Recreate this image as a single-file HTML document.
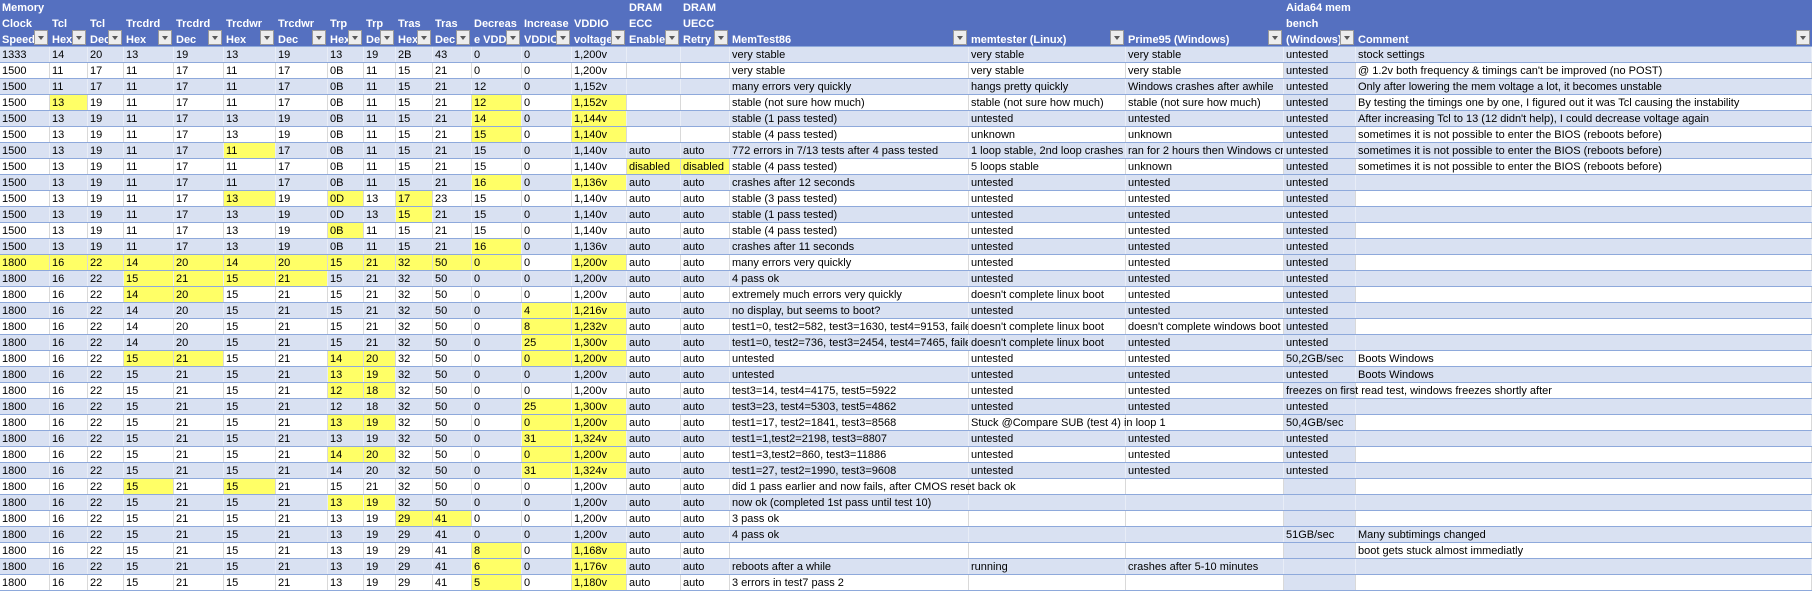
<!DOCTYPE html>
<html><head><meta charset="utf-8">
<style>
*{box-sizing:border-box;margin:0;padding:0}
body{width:1812px;height:592px;background:#fff;font-family:"Liberation Sans",Arial,sans-serif;font-size:11px;color:#000;overflow:hidden}
.r{display:flex;height:16px;border-bottom:1px solid #8EA9DB;background:#fff}
.r.b{background:#D9E1F2}
.r>div{height:15px;line-height:16px;padding-left:2px;white-space:nowrap;overflow:hidden;border-right:1px solid #D9D9D9;flex:none;position:relative}
.r.b>div{border-right:1px solid #E8EDF7}
.r>div.y{background:#FFFF66}
.r>div.a{background:#D9E1F2}
.r>div.w{background:#fff}
.r>div.s{overflow:visible;z-index:2}
.h{display:flex;height:47px;background:#5570C0;border-bottom:1px solid #8EA9DB}
.h>div{flex:none;position:relative;color:#fff;font-weight:bold;display:flex;flex-direction:column;justify-content:flex-end;padding:0 0 0 2px;overflow:hidden;white-space:nowrap;line-height:16px}
.h>div span{position:relative;top:2px}
.h>div i{position:absolute;right:2px;bottom:1px;width:14px;height:15px;background:#EDEDED;border:1px solid #9a9a9a;z-index:3}
.h>div i:after{content:"";position:absolute;left:3px;top:5px;border-left:3.5px solid transparent;border-right:3.5px solid transparent;border-top:4px solid #5a5a5a}
.h>div:nth-child(1),.r>div:nth-child(1){width:50px}
.h>div:nth-child(2),.r>div:nth-child(2){width:38px}
.h>div:nth-child(3),.r>div:nth-child(3){width:36px}
.h>div:nth-child(4),.r>div:nth-child(4){width:50px}
.h>div:nth-child(5),.r>div:nth-child(5){width:50px}
.h>div:nth-child(6),.r>div:nth-child(6){width:52px}
.h>div:nth-child(7),.r>div:nth-child(7){width:52px}
.h>div:nth-child(8),.r>div:nth-child(8){width:36px}
.h>div:nth-child(9),.r>div:nth-child(9){width:32px}
.h>div:nth-child(10),.r>div:nth-child(10){width:37px}
.h>div:nth-child(11),.r>div:nth-child(11){width:39px}
.h>div:nth-child(12),.r>div:nth-child(12){width:50px}
.h>div:nth-child(13),.r>div:nth-child(13){width:50px}
.h>div:nth-child(14),.r>div:nth-child(14){width:55px}
.h>div:nth-child(15),.r>div:nth-child(15){width:54px}
.h>div:nth-child(16),.r>div:nth-child(16){width:49px}
.h>div:nth-child(17),.r>div:nth-child(17){width:239px}
.h>div:nth-child(18),.r>div:nth-child(18){width:157px}
.h>div:nth-child(19),.r>div:nth-child(19){width:158px}
.h>div:nth-child(20),.r>div:nth-child(20){width:72px}
.h>div:nth-child(21),.r>div:nth-child(21){width:456px}
.r>div:nth-child(20){background:#D9E1F2}
</style></head><body>
<div class="h">
<div><span>Memory</span><span>Clock</span><span>Speed</span><i></i></div>
<div><span>Tcl</span><span>Hex</span><i></i></div>
<div><span>Tcl</span><span>Dec</span><i></i></div>
<div><span>Trcdrd</span><span>Hex</span><i></i></div>
<div><span>Trcdrd</span><span>Dec</span><i></i></div>
<div><span>Trcdwr</span><span>Hex</span><i></i></div>
<div><span>Trcdwr</span><span>Dec</span><i></i></div>
<div><span>Trp</span><span>Hex</span><i></i></div>
<div><span>Trp</span><span>Dec</span><i></i></div>
<div><span>Tras</span><span>Hex</span><i></i></div>
<div><span>Tras</span><span>Dec</span><i></i></div>
<div><span>Decreas</span><span>e VDDIO</span><i></i></div>
<div><span>Increase</span><span>VDDIO</span><i></i></div>
<div><span>VDDIO</span><span>voltage</span><i></i></div>
<div><span>DRAM</span><span>ECC</span><span>Enable</span><i></i></div>
<div><span>DRAM</span><span>UECC</span><span>Retry</span><i></i></div>
<div><span>MemTest86</span><i></i></div>
<div><span>memtester (Linux)</span><i></i></div>
<div><span>Prime95 (Windows)</span><i></i></div>
<div><span>Aida64 mem</span><span>bench</span><span>(Windows)</span><i></i></div>
<div><span>Comment</span><i></i></div>
</div>

<div class="r b"><div>1333</div><div>14</div><div>20</div><div>13</div><div>19</div><div>13</div><div>19</div><div>13</div><div>19</div><div>2B</div><div>43</div><div>0</div><div>0</div><div>1,200v</div><div></div><div></div><div>very stable</div><div>very stable</div><div>very stable</div><div>untested</div><div>stock settings</div></div>
<div class="r"><div>1500</div><div>11</div><div>17</div><div>11</div><div>17</div><div>11</div><div>17</div><div>0B</div><div>11</div><div>15</div><div>21</div><div>0</div><div>0</div><div>1,200v</div><div></div><div></div><div>very stable</div><div>very stable</div><div>very stable</div><div>untested</div><div>@ 1.2v both frequency &amp; timings can't be improved (no POST)</div></div>
<div class="r b"><div>1500</div><div>11</div><div>17</div><div>11</div><div>17</div><div>11</div><div>17</div><div>0B</div><div>11</div><div>15</div><div>21</div><div>12</div><div>0</div><div>1,152v</div><div></div><div></div><div>many errors very quickly</div><div>hangs pretty quickly</div><div>Windows crashes after awhile</div><div>untested</div><div>Only after lowering the mem voltage a lot, it becomes unstable</div></div>
<div class="r"><div>1500</div><div class="y">13</div><div>19</div><div>11</div><div>17</div><div>11</div><div>17</div><div>0B</div><div>11</div><div>15</div><div>21</div><div class="y">12</div><div>0</div><div class="y">1,152v</div><div></div><div></div><div>stable (not sure how much)</div><div>stable (not sure how much)</div><div>stable (not sure how much)</div><div>untested</div><div>By testing the timings one by one, I figured out it was Tcl causing the instability</div></div>
<div class="r b"><div>1500</div><div>13</div><div>19</div><div>11</div><div>17</div><div>13</div><div>19</div><div>0B</div><div>11</div><div>15</div><div>21</div><div class="y">14</div><div>0</div><div class="y">1,144v</div><div></div><div></div><div>stable (1 pass tested)</div><div>untested</div><div>untested</div><div>untested</div><div>After increasing Tcl to 13 (12 didn't help), I could decrease voltage again</div></div>
<div class="r"><div>1500</div><div>13</div><div>19</div><div>11</div><div>17</div><div>13</div><div>19</div><div>0B</div><div>11</div><div>15</div><div>21</div><div class="y">15</div><div>0</div><div class="y">1,140v</div><div></div><div></div><div>stable (4 pass tested)</div><div>unknown</div><div>unknown</div><div>untested</div><div>sometimes it is not possible to enter the BIOS (reboots before)</div></div>
<div class="r b"><div>1500</div><div>13</div><div>19</div><div>11</div><div>17</div><div class="y">11</div><div>17</div><div>0B</div><div>11</div><div>15</div><div>21</div><div>15</div><div>0</div><div>1,140v</div><div>auto</div><div>auto</div><div>772 errors in 7/13 tests after 4 pass tested</div><div>1 loop stable, 2nd loop crashes</div><div>ran for 2 hours then Windows crashed</div><div>untested</div><div>sometimes it is not possible to enter the BIOS (reboots before)</div></div>
<div class="r"><div>1500</div><div>13</div><div>19</div><div>11</div><div>17</div><div>11</div><div>17</div><div>0B</div><div>11</div><div>15</div><div>21</div><div>15</div><div>0</div><div>1,140v</div><div class="y">disabled</div><div class="y">disabled</div><div>stable (4 pass tested)</div><div>5 loops stable</div><div>unknown</div><div>untested</div><div>sometimes it is not possible to enter the BIOS (reboots before)</div></div>
<div class="r b"><div>1500</div><div>13</div><div>19</div><div>11</div><div>17</div><div>11</div><div>17</div><div>0B</div><div>11</div><div>15</div><div>21</div><div class="y">16</div><div>0</div><div class="y">1,136v</div><div>auto</div><div>auto</div><div>crashes after 12 seconds</div><div>untested</div><div>untested</div><div>untested</div><div></div></div>
<div class="r"><div>1500</div><div>13</div><div>19</div><div>11</div><div>17</div><div class="y">13</div><div>19</div><div class="y">0D</div><div>13</div><div class="y">17</div><div>23</div><div>15</div><div>0</div><div>1,140v</div><div>auto</div><div>auto</div><div>stable (3 pass tested)</div><div>untested</div><div>untested</div><div>untested</div><div></div></div>
<div class="r b"><div>1500</div><div>13</div><div>19</div><div>11</div><div>17</div><div>13</div><div>19</div><div>0D</div><div>13</div><div class="y">15</div><div>21</div><div>15</div><div>0</div><div>1,140v</div><div>auto</div><div>auto</div><div>stable (1 pass tested)</div><div>untested</div><div>untested</div><div>untested</div><div></div></div>
<div class="r"><div>1500</div><div>13</div><div>19</div><div>11</div><div>17</div><div>13</div><div>19</div><div class="y">0B</div><div>11</div><div>15</div><div>21</div><div>15</div><div>0</div><div>1,140v</div><div>auto</div><div>auto</div><div>stable (4 pass tested)</div><div>untested</div><div>untested</div><div>untested</div><div></div></div>
<div class="r b"><div>1500</div><div>13</div><div>19</div><div>11</div><div>17</div><div>13</div><div>19</div><div>0B</div><div>11</div><div>15</div><div>21</div><div class="y">16</div><div>0</div><div>1,136v</div><div>auto</div><div>auto</div><div>crashes after 11 seconds</div><div>untested</div><div>untested</div><div>untested</div><div></div></div>
<div class="r"><div class="y">1800</div><div class="y">16</div><div class="y">22</div><div class="y">14</div><div class="y">20</div><div class="y">14</div><div class="y">20</div><div class="y">15</div><div class="y">21</div><div class="y">32</div><div class="y">50</div><div class="y">0</div><div>0</div><div class="y">1,200v</div><div>auto</div><div>auto</div><div>many errors very quickly</div><div>untested</div><div>untested</div><div>untested</div><div></div></div>
<div class="r b"><div>1800</div><div>16</div><div>22</div><div class="y">15</div><div class="y">21</div><div class="y">15</div><div class="y">21</div><div>15</div><div>21</div><div>32</div><div>50</div><div>0</div><div>0</div><div>1,200v</div><div>auto</div><div>auto</div><div>4 pass ok</div><div>untested</div><div>untested</div><div>untested</div><div></div></div>
<div class="r"><div>1800</div><div>16</div><div>22</div><div class="y">14</div><div class="y">20</div><div>15</div><div>21</div><div>15</div><div>21</div><div>32</div><div>50</div><div>0</div><div>0</div><div>1,200v</div><div>auto</div><div>auto</div><div>extremely much errors very quickly</div><div>doesn't complete linux boot</div><div>untested</div><div>untested</div><div></div></div>
<div class="r b"><div>1800</div><div>16</div><div>22</div><div>14</div><div>20</div><div>15</div><div>21</div><div>15</div><div>21</div><div>32</div><div>50</div><div>0</div><div class="y">4</div><div class="y">1,216v</div><div>auto</div><div>auto</div><div>no display, but seems to boot?</div><div>untested</div><div>untested</div><div>untested</div><div></div></div>
<div class="r"><div>1800</div><div>16</div><div>22</div><div>14</div><div>20</div><div>15</div><div>21</div><div>15</div><div>21</div><div>32</div><div>50</div><div>0</div><div class="y">8</div><div class="y">1,232v</div><div>auto</div><div>auto</div><div>test1=0, test2=582, test3=1630, test4=9153, failed</div><div>doesn't complete linux boot</div><div>doesn't complete windows boot</div><div>untested</div><div></div></div>
<div class="r b"><div>1800</div><div>16</div><div>22</div><div>14</div><div>20</div><div>15</div><div>21</div><div>15</div><div>21</div><div>32</div><div>50</div><div>0</div><div class="y">25</div><div class="y">1,300v</div><div>auto</div><div>auto</div><div>test1=0, test2=736, test3=2454, test4=7465, failed</div><div>doesn't complete linux boot</div><div>untested</div><div>untested</div><div></div></div>
<div class="r"><div>1800</div><div>16</div><div>22</div><div class="y">15</div><div class="y">21</div><div>15</div><div>21</div><div class="y">14</div><div class="y">20</div><div>32</div><div>50</div><div>0</div><div class="y">0</div><div class="y">1,200v</div><div>auto</div><div>auto</div><div>untested</div><div>untested</div><div>untested</div><div class="w">50,2GB/sec</div><div>Boots Windows</div></div>
<div class="r b"><div>1800</div><div>16</div><div>22</div><div>15</div><div>21</div><div>15</div><div>21</div><div class="y">13</div><div class="y">19</div><div>32</div><div>50</div><div>0</div><div>0</div><div>1,200v</div><div>auto</div><div>auto</div><div>untested</div><div>untested</div><div>untested</div><div>untested</div><div>Boots Windows</div></div>
<div class="r"><div>1800</div><div>16</div><div>22</div><div>15</div><div>21</div><div>15</div><div>21</div><div class="y">12</div><div class="y">18</div><div>32</div><div>50</div><div>0</div><div>0</div><div>1,200v</div><div>auto</div><div>auto</div><div>test3=14, test4=4175, test5=5922</div><div>untested</div><div>untested</div><div class="w s">freezes on first read test, windows freezes shortly after</div><div></div></div>
<div class="r b"><div>1800</div><div>16</div><div>22</div><div>15</div><div>21</div><div>15</div><div>21</div><div>12</div><div>18</div><div>32</div><div>50</div><div>0</div><div class="y">25</div><div class="y">1,300v</div><div>auto</div><div>auto</div><div>test3=23, test4=5303, test5=4862</div><div>untested</div><div>untested</div><div>untested</div><div></div></div>
<div class="r"><div>1800</div><div>16</div><div>22</div><div>15</div><div>21</div><div>15</div><div>21</div><div class="y">13</div><div class="y">19</div><div>32</div><div>50</div><div>0</div><div class="y">0</div><div class="y">1,200v</div><div>auto</div><div>auto</div><div>test1=17, test2=1841, test3=8568</div><div class="s">Stuck @Compare SUB (test 4) in loop 1</div><div></div><div class="w">50,4GB/sec</div><div></div></div>
<div class="r b"><div>1800</div><div>16</div><div>22</div><div>15</div><div>21</div><div>15</div><div>21</div><div>13</div><div>19</div><div>32</div><div>50</div><div>0</div><div class="y">31</div><div class="y">1,324v</div><div>auto</div><div>auto</div><div>test1=1,test2=2198, test3=8807</div><div>untested</div><div>untested</div><div>untested</div><div></div></div>
<div class="r"><div>1800</div><div>16</div><div>22</div><div>15</div><div>21</div><div>15</div><div>21</div><div class="y">14</div><div class="y">20</div><div>32</div><div>50</div><div>0</div><div class="y">0</div><div class="y">1,200v</div><div>auto</div><div>auto</div><div>test1=3,test2=860, test3=11886</div><div>untested</div><div>untested</div><div>untested</div><div></div></div>
<div class="r b"><div>1800</div><div>16</div><div>22</div><div>15</div><div>21</div><div>15</div><div>21</div><div>14</div><div>20</div><div>32</div><div>50</div><div>0</div><div class="y">31</div><div class="y">1,324v</div><div>auto</div><div>auto</div><div>test1=27, test2=1990, test3=9608</div><div>untested</div><div>untested</div><div>untested</div><div></div></div>
<div class="r"><div>1800</div><div>16</div><div>22</div><div class="y">15</div><div>21</div><div class="y">15</div><div>21</div><div>15</div><div>21</div><div>32</div><div>50</div><div>0</div><div>0</div><div>1,200v</div><div>auto</div><div>auto</div><div class="s">did 1 pass earlier and now fails, after CMOS reset back ok</div><div></div><div></div><div></div><div></div></div>
<div class="r b"><div>1800</div><div>16</div><div>22</div><div>15</div><div>21</div><div>15</div><div>21</div><div class="y">13</div><div class="y">19</div><div>32</div><div>50</div><div>0</div><div>0</div><div>1,200v</div><div>auto</div><div>auto</div><div>now ok (completed 1st pass until test 10)</div><div></div><div></div><div></div><div></div></div>
<div class="r"><div>1800</div><div>16</div><div>22</div><div>15</div><div>21</div><div>15</div><div>21</div><div>13</div><div>19</div><div class="y">29</div><div class="y">41</div><div>0</div><div>0</div><div>1,200v</div><div>auto</div><div>auto</div><div>3 pass ok</div><div></div><div></div><div></div><div></div></div>
<div class="r b"><div>1800</div><div>16</div><div>22</div><div>15</div><div>21</div><div>15</div><div>21</div><div>13</div><div>19</div><div>29</div><div>41</div><div>0</div><div>0</div><div>1,200v</div><div>auto</div><div>auto</div><div>4 pass ok</div><div></div><div></div><div>51GB/sec</div><div>Many subtimings changed</div></div>
<div class="r"><div>1800</div><div>16</div><div>22</div><div>15</div><div>21</div><div>15</div><div>21</div><div>13</div><div>19</div><div>29</div><div>41</div><div class="y">8</div><div>0</div><div class="y">1,168v</div><div>auto</div><div>auto</div><div></div><div></div><div></div><div></div><div>boot gets stuck almost immediatly</div></div>
<div class="r b"><div>1800</div><div>16</div><div>22</div><div>15</div><div>21</div><div>15</div><div>21</div><div>13</div><div>19</div><div>29</div><div>41</div><div class="y">6</div><div>0</div><div class="y">1,176v</div><div>auto</div><div>auto</div><div>reboots after a while</div><div>running</div><div class="s">crashes after 5-10 minutes</div><div></div><div></div></div>
<div class="r"><div>1800</div><div>16</div><div>22</div><div>15</div><div>21</div><div>15</div><div>21</div><div>13</div><div>19</div><div>29</div><div>41</div><div class="y">5</div><div>0</div><div class="y">1,180v</div><div>auto</div><div>auto</div><div>3 errors in test7 pass 2</div><div></div><div></div><div></div><div></div></div>
</body></html>
